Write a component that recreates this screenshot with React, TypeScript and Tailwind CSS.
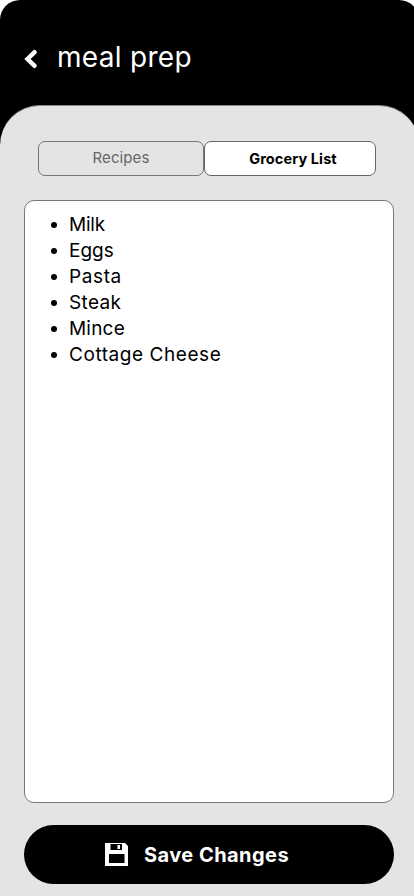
import React from "react";

const items = [
  { name: "Milk", spacing: "tracking-[-0.2px]" },
  { name: "Eggs", spacing: "tracking-normal" },
  { name: "Pasta", spacing: "tracking-[0.6px]" },
  { name: "Steak", spacing: "tracking-[0.35px]" },
  { name: "Mince", spacing: "tracking-[0.2px]" },
  { name: "Cottage Cheese", spacing: "tracking-[0.56px]" },
];

export default function App() {
  return (
    <div className="h-[896px] w-[414px] overflow-hidden bg-white font-['Inter','Liberation_Sans',sans-serif] text-black">
      <div className="flex h-full w-[419px] flex-col overflow-hidden rounded-t-[20px] bg-black">
        <header className="flex h-[105px] shrink-0 items-center pl-6 pt-[9px] text-white">
          <svg width="14" height="20" viewBox="0 0 14 20" className="mt-1 shrink-0" fill="none" stroke="currentColor" strokeWidth="4.4" strokeLinecap="round" strokeLinejoin="miter">
            <path d="M10.600 3.200 3.500 10l7.100 6.800" />
          </svg>
          <h1 className="ml-[19px] whitespace-nowrap text-[28px] font-normal leading-[38px] tracking-[0.3px]">meal prep</h1>
        </header>
        <main className="flex min-h-0 grow flex-col rounded-t-[40px] border-t border-[#8a8a8a] bg-[#e4e4e4] pl-6">
          <div className="ml-3.5 mt-[35px] flex h-[35px] shrink-0">
            <button className="w-[166px] rounded-[7px] border border-[#777] text-[15px] tracking-[0.1px] text-[#666]">Recipes</button>
            <button className="w-[172px] rounded-[7px] border border-[#666] bg-white pl-1.5 text-[14.5px] font-bold tracking-[0.1px]">Grocery List</button>
          </div>
          <section className="mt-6 h-[603px] w-[370px] shrink-0 rounded-[10px] border border-[#777] bg-white pl-[26px] pt-[11px]">
            <ul className="text-[19px] leading-[26px]">
              {items.map((item) => (
                <li key={item.name} className="flex items-center gap-3">
                  <span className="size-1.5 rounded-full bg-black" />
                  <span className={item.spacing}>{item.name}</span>
                </li>
              ))}
            </ul>
          </section>
          <button className="mt-[22px] flex h-[59px] w-[370px] shrink-0 items-center rounded-full bg-black pl-[81px] text-white">
            <svg width="23" height="23" viewBox="0 0 23 23" className="shrink-0">
              <path fill="white" fillRule="evenodd" d="M0 0h20l3 3v20H0zM5.500 1v6h11.500V1zM4 11v9h15.500v-9z" />
              <path fill="white" d="M12.500 2h2.500v4h-2.500z" />
            </svg>
            <span className="ml-4 whitespace-nowrap text-[20px] font-bold tracking-[0.45px]">Save Changes</span>
          </button>
        </main>
      </div>
    </div>
  );
}
